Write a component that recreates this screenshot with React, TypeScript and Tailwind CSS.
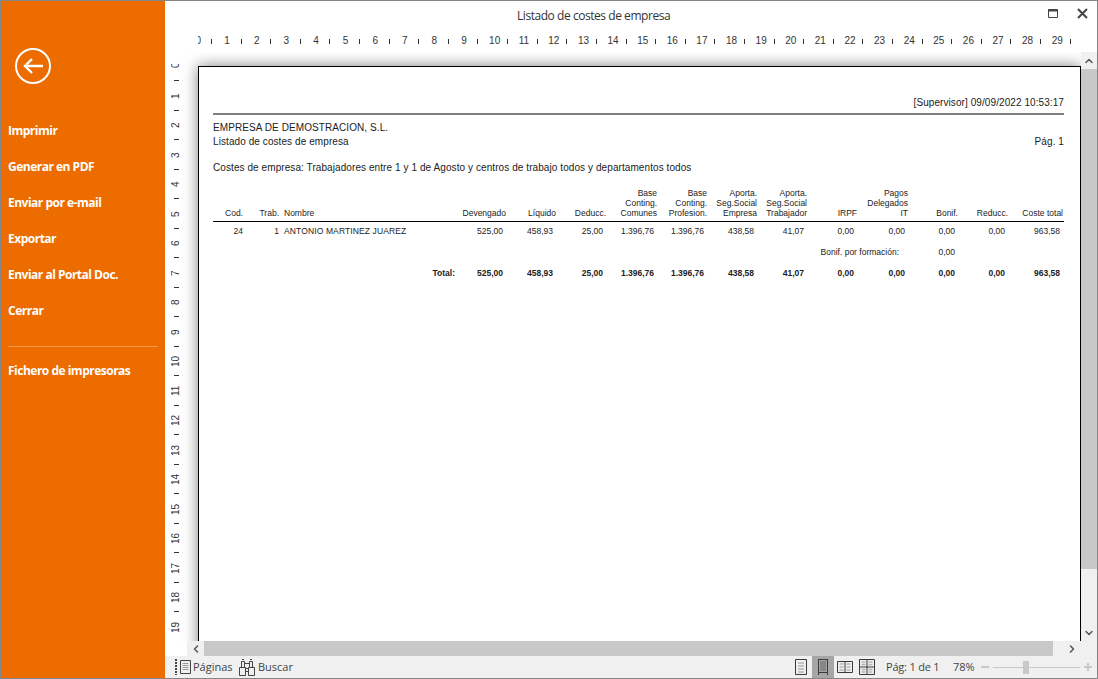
import { ChevronDown, ChevronLeft, ChevronRight, ChevronUp } from 'lucide-react';

const MENU = ['Imprimir', 'Generar en PDF', 'Enviar por e-mail', 'Exportar', 'Enviar al Portal Doc.', 'Cerrar'];
const HEAD_RULER = Array.from({ length: 30 }, (_, i) => i);
const SIDE_RULER = Array.from({ length: 20 }, (_, i) => i);

const COLUMNS = [
  { head: ['Devengado'], row: '525,00', total: '525,00' },
  { head: ['Líquido'], row: '458,93', total: '458,93' },
  { head: ['Deducc.'], row: '25,00', total: '25,00' },
  { head: ['Base', 'Conting.', 'Comunes'], row: '1.396,76', total: '1.396,76' },
  { head: ['Base', 'Conting.', 'Profesion.'], row: '1.396,76', total: '1.396,76' },
  { head: ['Aporta.', 'Seg.Social', 'Empresa'], row: '438,58', total: '438,58' },
  { head: ['Aporta.', 'Seg.Social', 'Trabajador'], row: '41,07', total: '41,07' },
  { head: ['IRPF'], row: '0,00', total: '0,00' },
  { head: ['Pagos', 'Delegados', 'IT'], row: '0,00', total: '0,00' },
  { head: ['Bonif.'], row: '0,00', total: '0,00' },
  { head: ['Reducc.'], row: '0,00', total: '0,00' },
  { head: ['Coste total'], row: '963,58', total: '963,58' },
];

const GRID = 'grid grid-cols-[30px_36px_176px_51px_50px_50px_51px_50px_50px_50px_50px_51px_50px_50px_55px]';

function PagesIcon() {
  return (
    <svg width="16" height="16" viewBox="0 0 16 16" fill="none" stroke="#444">
      <path d="M1 0v16" strokeWidth="2" strokeDasharray="2 1" />
      <path d="M5.5 1.5h10v13h-10z" />
      <path d="M7.5 4.5h6M7.5 6.5h6M7.5 8.5h6M7.5 10.5h6" stroke="#999" />
    </svg>
  );
}

function BinocularsIcon() {
  return (
    <svg width="16" height="17" viewBox="0 0 16 17" fill="none" stroke="#444">
      <path d="M.5 8.5h6v8h-6zM9.5 8.5h6v8h-6z" />
      <path d="M2.5 8.5v-6h3v6M10.5 8.5v-6h3v6M5.5 4.5h5M6.5 9.5h3M6.5 12.5h3" />
      <path d="M3 .5h2M11 .5h2" />
    </svg>
  );
}

function PageViewIcon({ kind }: { kind: string }) {
  return (
    <svg width="16" height="16" viewBox="0 0 16 16" fill="none" stroke="#3a3a3a">
      {kind === 'single' && (
        <>
          <path d="M2.5 .5h11v15h-11z" />
          <path d="M5 4h6M5 7h6M5 10h6M5 13h6" stroke="#b5b5b5" strokeWidth="1.3" />
        </>
      )}
      {kind === 'width' && (
        <>
          <path d="M3.5 0v16M12.5 0v16M3 .5h10M3 13.5h10" />
          <path d="M5 3h6M5 5h6M5 7h6M5 9h6M5 11h6" stroke="#666" />
        </>
      )}
      {kind === 'two' && (
        <>
          <path d="M.5 2.5h15v11H.5zM8 2.5v11" />
          <path d="M2.5 5h4M2.5 8h4M2.5 11h4M9.5 5h4M9.5 8h4M9.5 11h4" stroke="#b5b5b5" strokeWidth="1.3" />
        </>
      )}
      {kind === 'four' && (
        <>
          <path d="M.5 .5h15v15H.5zM8 .5v15M.5 8h15" />
          <path d="M2.5 3h4M2.5 5.5h4M9.5 3h4M9.5 5.5h4M2.5 10.5h4M2.5 13h4M9.5 10.5h4M9.5 13h4" stroke="#b5b5b5" strokeWidth="1.3" />
        </>
      )}
    </svg>
  );
}

export default function App() {
  return (
    <div className="flex h-[679px] w-[1098px] overflow-hidden border border-[#858585] bg-white font-['Liberation_Sans',sans-serif]">
      <aside className="flex w-[164px] shrink-0 flex-col bg-[#ec6c00] pt-[47px] font-['Open_Sans',sans-serif] text-white">
        <div className="ml-[14px] flex h-[36px] w-[36px] items-center justify-center rounded-full border-2 border-white">
          <svg width="22" height="18" viewBox="0 0 22 18" fill="none" stroke="white" strokeWidth="2.4">
            <path d="M21 9H3M10 2 3 9l7 7" />
          </svg>
        </div>
        <nav className="mt-[29px] flex flex-col">
          {MENU.map((item) => (
            <div key={item} className="flex h-[36px] items-center pl-[7px] text-[12px] font-bold tracking-[-0.5px]">
              {item}
            </div>
          ))}
        </nav>
        <div className="mx-[7px] mt-[17px] h-px bg-[#f29a50]" />
        <div className="mt-[6px] flex h-[36px] items-center pl-[7px] text-[12px] font-bold tracking-[-0.5px]">
          Fichero de impresoras
        </div>
      </aside>

      <main className="flex min-w-0 flex-1 flex-col">
        <header className="flex h-[30px] shrink-0 items-center pl-[352px] font-['Open_Sans',sans-serif] text-[12px] tracking-[-0.45px] text-[#333]">
          <span className="w-[513px]">Listado de costes de empresa</span>
          <svg className="-mt-[5px] ml-[18px]" width="11" height="10" viewBox="0 0 11 10" fill="none" stroke="#444">
            <path d="M.5 .5h9v8h-9z" />
            <path d="M0 1.5h10" strokeWidth="2" />
          </svg>
          <svg className="-mt-[5px] ml-[18px]" width="11" height="11" viewBox="0 0 11 11" fill="none" stroke="#444" strokeWidth="2">
            <path d="M1 1l9 9M10 1l-9 9" />
          </svg>
        </header>

        <div className="flex h-[21px] shrink-0 pl-[33px] text-[10px] text-[#333]">
          {HEAD_RULER.map((n) => (
            <div key={n} className={n === 0 ? 'flex h-[20px] w-[27.62px] shrink-0 items-center' : 'flex h-[20px] w-[29.62px] shrink-0 items-center'}>
              <span className={n === 0 ? 'w-[3px] overflow-hidden text-right leading-none' : '-ml-[3px] w-[9px] text-center leading-none'}>
                <span className={n === 0 ? '-ml-[3px] inline-block' : ''}>{n}</span>
              </span>
              <span className={n === 0 ? 'ml-[10px] h-[5px] w-px bg-[#333]' : 'ml-[9px] h-[5px] w-px bg-[#333]'} />
            </div>
          ))}
        </div>

        <div className="flex min-h-0 flex-1 overflow-hidden">
          <div className="flex min-w-0 flex-1">
            <div className="flex w-[33px] shrink-0 flex-col pt-[10px] text-[10px] text-[#333]">
              {SIDE_RULER.map((n) => (
                <div key={n} className="flex h-[29.5px] w-[22px] shrink-0 flex-col items-center">
                  <span className="-mt-[1px] flex h-[10px] rotate-180 items-center justify-center overflow-hidden leading-none [writing-mode:vertical-rl]">
                    {n === 0 ? <span className="h-[4px] overflow-hidden">0</span> : n}
                  </span>
                  <span className="mt-[9px] h-px w-[5px] bg-[#333]" />
                </div>
              ))}
            </div>
            <div className="min-w-0 flex-1 pt-[14px]">
              <div className="h-[600px] border border-b-0 border-black pl-[14px] pr-[16px] text-[10px] leading-[12px] tracking-[0.08px] text-[#222] shadow-[0_0_14px_rgba(0,0,0,0.5)]">
                <div className="pt-[30px] text-right">[Supervisor] 09/09/2022 10:53:17</div>
                <div className="mt-[4px] h-[2px] bg-[#808080]" />
                <div className="mt-[7px]">EMPRESA DE DEMOSTRACION, S.L.</div>
                <div className="mt-[2px] flex justify-between">
                  <span>Listado de costes de empresa</span>
                  <span>Pág. 1</span>
                </div>
                <div className="mt-[14px]">
                  Costes de empresa: Trabajadores entre 1 y 1 de Agosto y centros de trabajo todos y departamentos todos
                </div>

                <div className={`${GRID} mt-[14px] items-end border-b border-black pb-[3px] text-[8.5px] leading-[10px] tracking-normal`}>
                  <div className="text-right">Cod.</div>
                  <div className="text-right">Trab.</div>
                  <div className="pl-[5px]">Nombre</div>
                  {COLUMNS.map((c) => (
                    <div key={c.head.join()} className="text-right">
                      {c.head.map((line) => (
                        <div key={line}>{line}</div>
                      ))}
                    </div>
                  ))}
                </div>
                <div className={`${GRID} mt-[4px] text-[8.5px] leading-[10px] tracking-normal`}>
                  <div className="text-right">24</div>
                  <div className="text-right">1</div>
                  <div className="whitespace-nowrap pl-[5px] tracking-[0.12px]">ANTONIO MARTINEZ JUAREZ</div>
                  {COLUMNS.map((c) => (
                    <div key={c.head.join()} className="pr-[3px] text-right">
                      {c.row}
                    </div>
                  ))}
                </div>
                <div className={`${GRID} mt-[11px] text-[8.5px] leading-[10px] tracking-normal`}>
                  <div className="col-span-12 pr-[9px] text-right">Bonif. por formación:</div>
                  <div className="pr-[3px] text-right">0,00</div>
                </div>
                <div className={`${GRID} mt-[11px] text-[8.5px] font-bold leading-[10px] tracking-normal`}>
                  <div className="col-span-3 text-right">Total:</div>
                  {COLUMNS.map((c) => (
                    <div key={c.head.join()} className="pr-[3px] text-right">
                      {c.total}
                    </div>
                  ))}
                </div>
              </div>
            </div>
          </div>

          <div className="flex w-[16px] shrink-0 flex-col bg-[#f0f0f0]">
            <div className="flex h-[17px] items-center justify-center">
              <ChevronUp size={12} strokeWidth={3} className="text-[#555]" />
            </div>
            <div className="h-[500px] bg-[#c8c8c8]" />
            <div className="mt-auto flex h-[17px] items-center justify-center">
              <ChevronDown size={12} strokeWidth={3} className="text-[#555]" />
            </div>
          </div>
        </div>

        <div className="ml-[22px] flex h-[15px] shrink-0 bg-[#f0f0f0]">
          <div className="flex w-[17px] items-center justify-center">
            <ChevronLeft size={12} strokeWidth={3} className="text-[#555]" />
          </div>
          <div className="w-[849px] bg-[#c8c8c8]" />
          <div className="flex w-[37px] items-center justify-center">
            <ChevronRight size={12} strokeWidth={3} className="text-[#555]" />
          </div>
        </div>

        <footer className="flex h-[22px] shrink-0 items-center whitespace-nowrap bg-[#f0f0f0] pl-[10px] font-['Open_Sans',sans-serif] text-[11px] text-[#444]">
          <PagesIcon />
          <span className="ml-[2px] w-[40px]">Páginas</span>
          <span className="ml-[6px]">
            <BinocularsIcon />
          </span>
          <span className="ml-[3px] w-[36px]">Buscar</span>
          <div className="ml-[496px] flex h-full items-center">
            <div className="flex h-full w-[22px] items-center justify-center">
              <PageViewIcon kind="single" />
            </div>
            <div className="flex h-full w-[22px] items-center justify-center bg-[#a6a6a6]">
              <PageViewIcon kind="width" />
            </div>
            <div className="flex h-full w-[22px] items-center justify-center">
              <PageViewIcon kind="two" />
            </div>
            <div className="flex h-full w-[22px] items-center justify-center">
              <PageViewIcon kind="four" />
            </div>
          </div>
          <span className="ml-[8px] w-[67px] tracking-[-0.2px]">Pág: 1 de 1</span>
          <span className="w-[28px]">78%</span>
          <div className="h-[2px] w-[8px] bg-[#c8c8c8]" />
          <div className="relative ml-[4px] h-px w-[87px] bg-[#c8c8c8]">
            <div className="absolute left-[30px] top-[-6px] h-[13px] w-[6px] bg-[#c8c8c8]" />
          </div>
          <div className="relative ml-[4px] h-[8px] w-[8px]">
            <div className="absolute left-0 top-[3px] h-[2px] w-[8px] bg-[#c8c8c8]" />
            <div className="absolute left-[3px] top-0 h-[8px] w-[2px] bg-[#c8c8c8]" />
          </div>
        </footer>
      </main>
    </div>
  );
}
